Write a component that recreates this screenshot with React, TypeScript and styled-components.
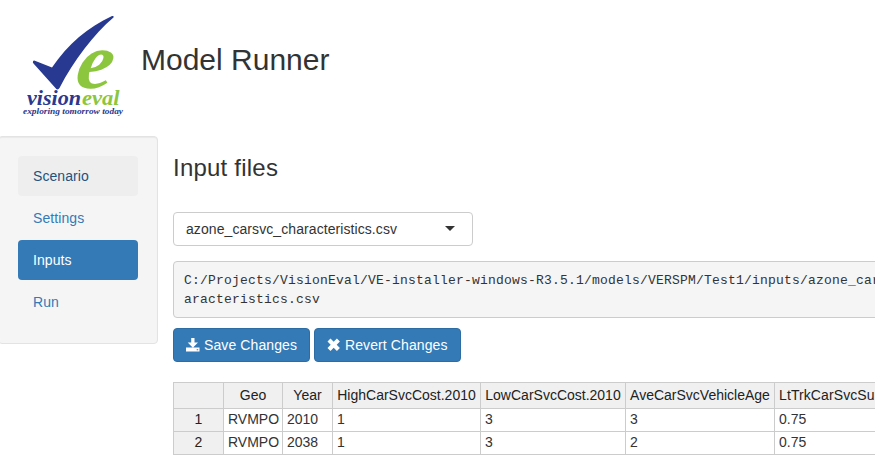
import React from "react";
import styled, { createGlobalStyle } from "styled-components";

const GlobalStyle = createGlobalStyle`
  *, *::before, *::after { box-sizing: border-box; }
  html, body { margin: 0; padding: 0; height: 467px; overflow: hidden; background: #fff; }
  body {
    font-family: "Liberation Sans", Arial, sans-serif;
    font-size: 14px;
    line-height: 20px;
    color: #333;
  }
`;

const Page = styled.div`
  width: 875px;
  height: 467px;
  overflow: hidden;
`;

const Header = styled.header`
  display: flex;
  height: 136px;
`;

const Logo = styled.svg`
  width: 141px;
  height: 130px;
  flex: none;
`;

const Title = styled.h1`
  margin: 43px 0 0;
  font-size: 30px;
  font-weight: 400;
  line-height: 33px;
`;

const Body = styled.div`
  display: flex;
`;

const Sidebar = styled.nav`
  flex: none;
  width: 160px;
  height: 208px;
  margin-left: -2px;
  padding: 19px;
  display: flex;
  flex-direction: column;
  gap: 2px;
  background: #f5f5f5;
  border: 1px solid #e3e3e3;
  border-radius: 4px;
  box-shadow: inset 0 1px 1px rgba(0, 0, 0, 0.05);
`;

type ItemState = "hover" | "active" | "idle";

const NavItem = styled.a<{ $state: ItemState }>`
  height: 40px;
  padding: 10px 15px;
  border-radius: 4px;
  letter-spacing: 0.08px;
  color: ${(p) => (p.$state === "active" ? "#fff" : p.$state === "hover" ? "#23527c" : "#337ab7")};
  background: ${(p) => (p.$state === "active" ? "#337ab7" : p.$state === "hover" ? "#eee" : "transparent")};
`;

const Content = styled.main`
  flex: none;
  width: 1000px;
  padding-left: 15px;
`;

const Heading = styled.h3`
  margin: 19px 0 31px;
  font-size: 24px;
  font-weight: 400;
  line-height: 26px;
  letter-spacing: 0.22px;
`;

const Select = styled.div`
  display: flex;
  justify-content: space-between;
  align-items: center;
  width: 300px;
  height: 34px;
  padding: 0 17px 0 12px;
  letter-spacing: 0.08px;
  border: 1px solid #ccc;
  border-radius: 4px;
`;

const Caret = styled.span`
  border: 5px solid transparent;
  border-top-color: #333;
  border-bottom: 0;
  margin-bottom: 2px;
`;

const Path = styled.pre`
  margin: 15px 0 10px;
  height: 57px;
  padding: 10px;
  font-family: "Liberation Mono", "Courier New", monospace;
  font-size: 13px;
  line-height: 18.5714px;
  letter-spacing: 0.2px;
  background: #f5f5f5;
  border: 1px solid #ccc;
  border-radius: 4px;
`;

const Buttons = styled.div`
  display: flex;
  gap: 4px;
`;

const Button = styled.button<{ $width: number }>`
  display: flex;
  align-items: center;
  gap: 4px;
  width: ${(p) => p.$width}px;
  height: 34px;
  padding: 0 0 0 12px;
  font: inherit;
  letter-spacing: 0.1px;
  white-space: nowrap;
  color: #fff;
  background: #337ab7;
  border: 1px solid #2e6da4;
  border-radius: 4px;
`;

const Glyph = styled.svg`
  width: 14px;
  height: 14px;
  flex: none;
  fill: currentColor;
`;

const Table = styled.table`
  margin-top: 20px;
  width: 811px;
  table-layout: fixed;
  border-collapse: separate;
  border-spacing: 0;
  border-top: 1px solid #ccc;
  border-left: 1px solid #ccc;
  line-height: 20px;
`;

const Th = styled.th<{ $align?: "left" }>`
  height: 26px;
  padding: ${(p) => (p.$align === "left" ? "0 0 1px 4px" : "0 0 1px")};
  font-weight: 400;
  text-align: ${(p) => p.$align ?? "center"};
  letter-spacing: ${(p) => (p.$align === "left" ? "0.1px" : "0")};
  white-space: nowrap;
  color: #222;
  background: #f0f0f0;
  border-right: 1px solid #ccc;
  border-bottom: 1px solid #ccc;
`;

const RowTh = styled(Th)`
  height: 23px;
  padding-bottom: 2px;
`;

const Td = styled.td`
  height: 23px;
  padding: 0 4px 2px;
  white-space: nowrap;
  border-right: 1px solid #ccc;
  border-bottom: 1px solid #ccc;
`;

const columns = [
  { name: "", width: 50 },
  { name: "Geo", width: 59 },
  { name: "Year", width: 50 },
  { name: "HighCarSvcCost.2010", width: 148 },
  { name: "LowCarSvcCost.2010", width: 145 },
  { name: "AveCarSvcVehicleAge", width: 149 },
  { name: "LtTrkCarSvcSub", width: 209 },
];

const rows = [
  ["RVMPO", "2010", "1", "3", "3", "0.75"],
  ["RVMPO", "2038", "1", "3", "2", "0.75"],
];

const nav: { label: string; state: ItemState }[] = [
  { label: "Scenario", state: "hover" },
  { label: "Settings", state: "idle" },
  { label: "Inputs", state: "active" },
  { label: "Run", state: "idle" },
];

function VisionEvalLogo() {
  return (
    <Logo viewBox="0 0 141 130" fontFamily="Liberation Serif, Times New Roman, serif" fontStyle="italic" fontWeight="700">
      <path
        d="M33 61.500 Q33.500 60 35.500 61 L52 67.500 C68 44 88 27 112 16 Q114.500 15.500 113.500 17.500 C94 34 74 60 59.500 88 Q57.500 91 55 87.500 L33.500 63.500 Q32.500 62.500 33 61.500Z"
        fill="#273990"
      />
      <text
        transform="translate(74 87.500) skewX(-8)"
        fontSize="80"
        fontWeight="700"
        fill="#8cc63f"
        textLength="37"
        lengthAdjust="spacingAndGlyphs"
      >
        e
      </text>
      <text x="27" y="105" fontSize="20" fill="#273990" textLength="54" lengthAdjust="spacingAndGlyphs">vision</text>
      <text x="82" y="105" fontSize="20" fill="#8cc63f" textLength="37.500" lengthAdjust="spacingAndGlyphs">eval</text>
      <text x="23" y="113.500" fontSize="9" fill="#273990" textLength="100" lengthAdjust="spacingAndGlyphs">exploring tomorrow today</text>
    </Logo>
  );
}

export default function App() {
  return (
    <Page>
      <GlobalStyle />
      <Header>
        <VisionEvalLogo />
        <Title>Model Runner</Title>
      </Header>
      <Body>
        <Sidebar>
          {nav.map((n) => (
            <NavItem key={n.label} $state={n.state}>{n.label}</NavItem>
          ))}
        </Sidebar>
        <Content>
          <Heading>Input files</Heading>
          <Select>
            azone_carsvc_characteristics.csv
            <Caret />
          </Select>
          <Path>{"C:/Projects/VisionEval/VE-installer-windows-R3.5.1/models/VERSPM/Test1/inputs/azone_carsvc_ch\naracteristics.csv"}</Path>
          <Buttons>
            <Button $width={137}>
              <Glyph viewBox="0 0 14 14">
                <path d="M5.200 0h3.300v4.500H12L6.850 9.800 1.700 4.500h3.500zM0 9.500h13.500v4H0zM10.700 11.200v1h1.500v-1z" fillRule="evenodd" />
              </Glyph>
              Save Changes
            </Button>
            <Button $width={147}>
              <Glyph viewBox="0 0 14 14">
                <path d="M3.500 .5 6.700 3.700 9.900 .5 12.900 3.500 9.700 6.700 12.900 9.900 9.900 12.900 6.700 9.700 3.500 12.900 .5 9.900 3.700 6.700 .5 3.500z" />
              </Glyph>
              Revert Changes
            </Button>
          </Buttons>
          <Table>
            <colgroup>
              {columns.map((c) => (
                <col key={c.name} width={c.width} />
              ))}
            </colgroup>
            <thead>
              <tr>
                {columns.map((c, i) => (
                  <Th key={c.name} $align={i === columns.length - 1 ? "left" : undefined}>{c.name}</Th>
                ))}
              </tr>
            </thead>
            <tbody>
              {rows.map((r, i) => (
                <tr key={i}>
                  <RowTh>{i + 1}</RowTh>
                  {r.map((v, j) => (
                    <Td key={j}>{v}</Td>
                  ))}
                </tr>
              ))}
            </tbody>
          </Table>
        </Content>
      </Body>
    </Page>
  );
}
